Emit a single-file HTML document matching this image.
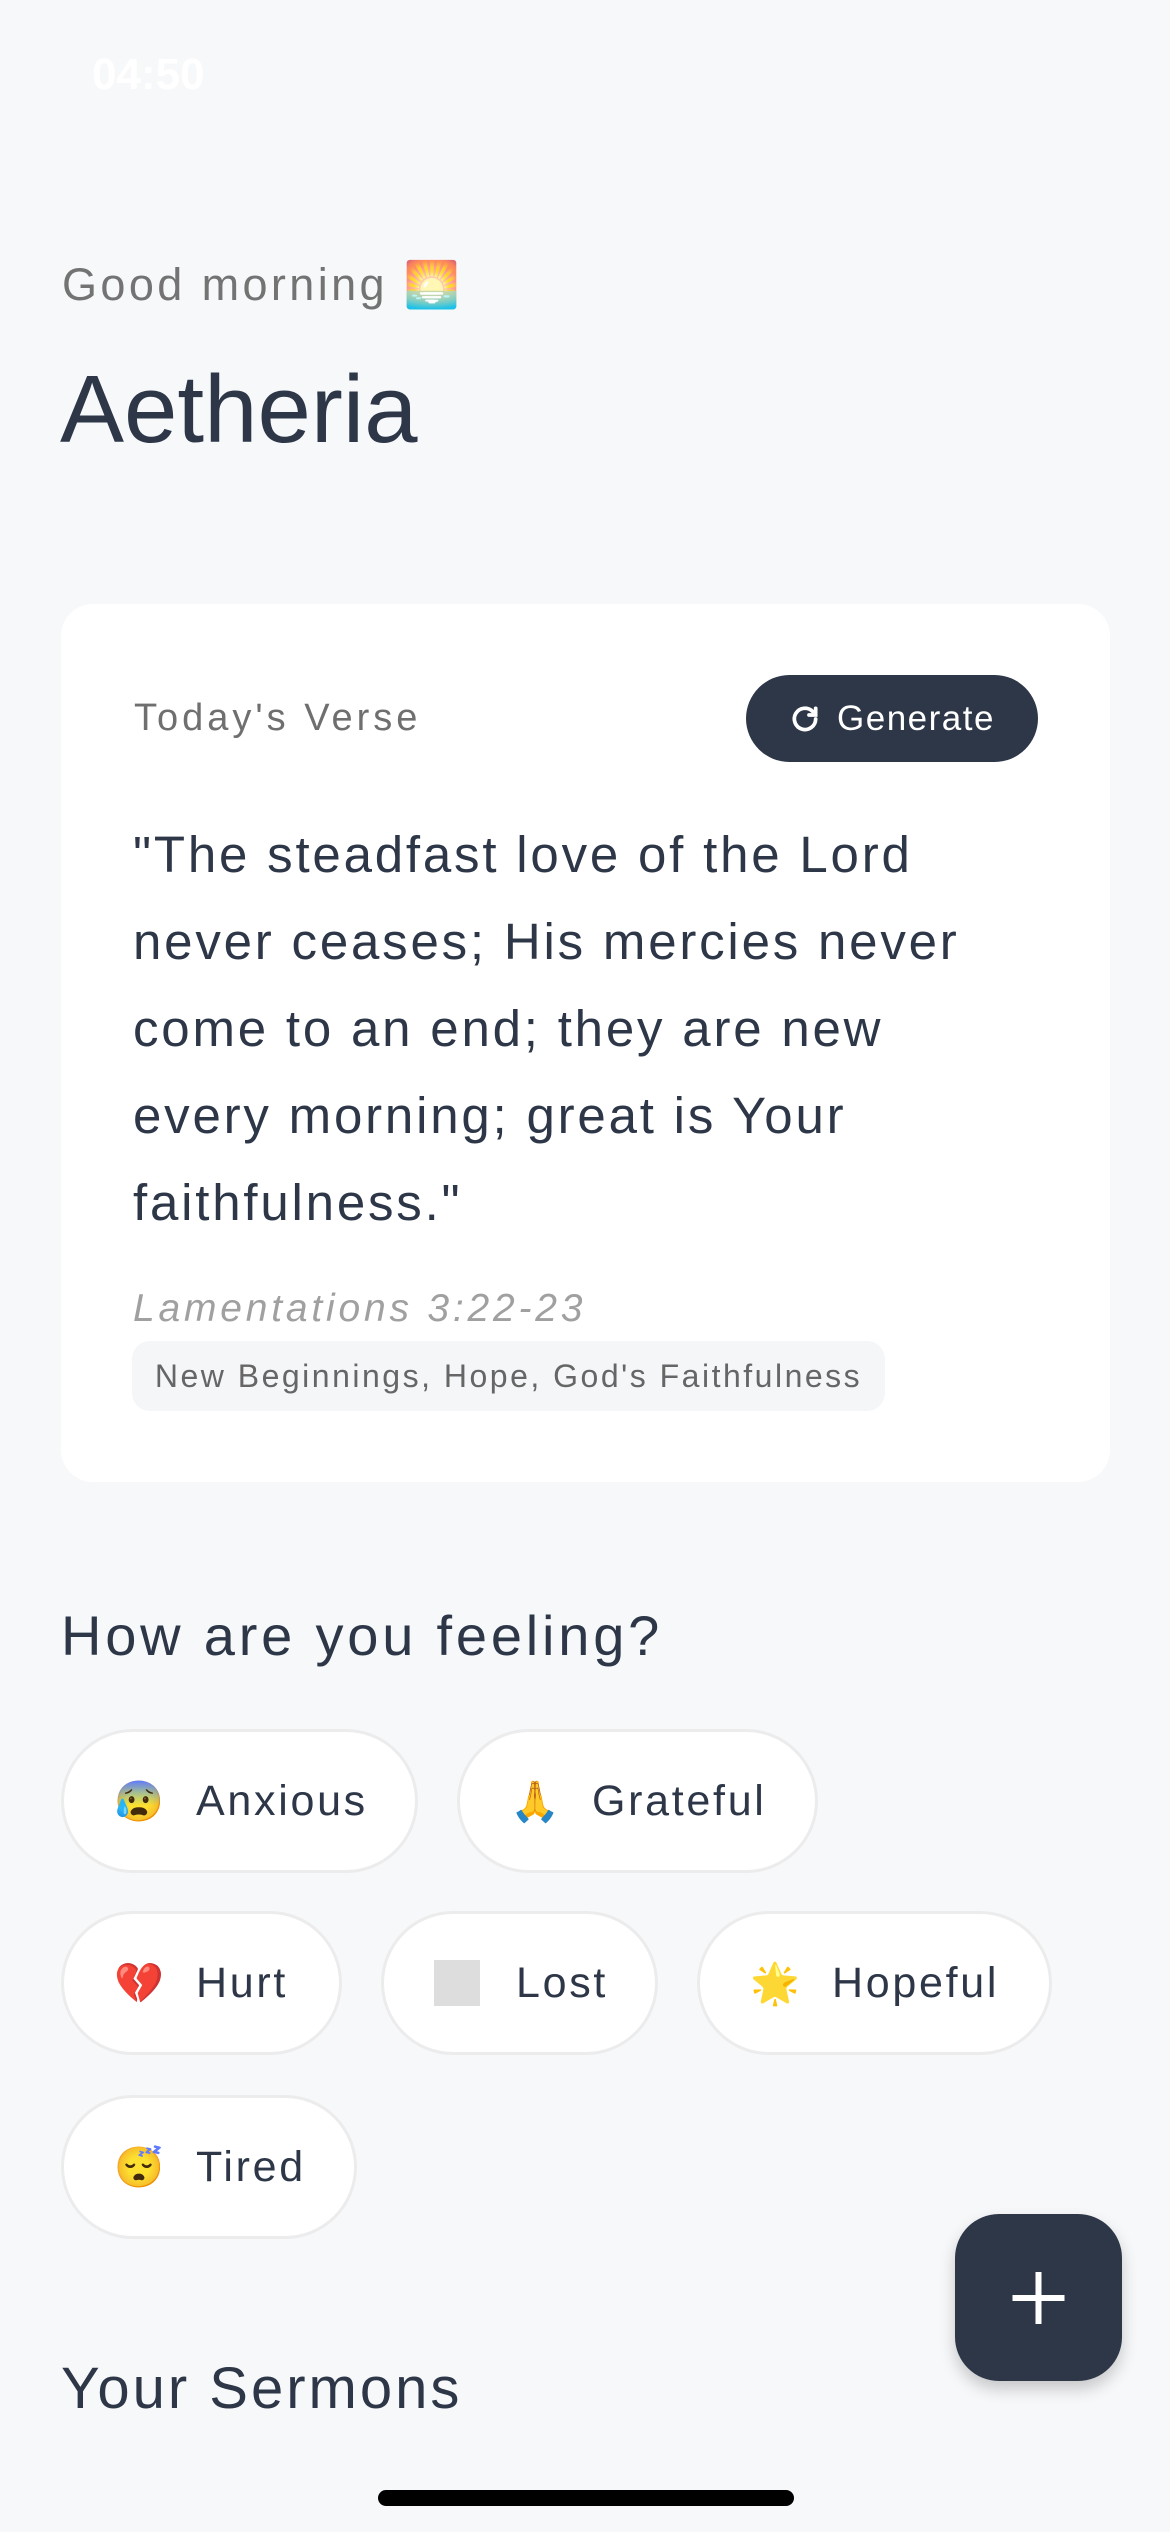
<!DOCTYPE html>
<html><head><meta charset="utf-8"><style>
*{margin:0;padding:0;box-sizing:border-box}
body{width:1170px;height:2532px;background:#f7f8fa;font-family:"Liberation Sans","Noto Sans CJK JP",sans-serif;position:relative;overflow:hidden;color:#2d3748}
.a{position:absolute;white-space:nowrap}
.card{position:absolute;left:61px;top:604px;width:1049px;height:878px;background:#fff;border-radius:32px}
.chip{position:absolute;height:144px;background:#fff;border:3px solid #ececec;border-radius:72px;font-size:43px;display:flex;align-items:center;padding-left:50px;color:#2d3748;letter-spacing:2.7px}
.chip .e{width:46px;font-size:40px;margin-right:36px;text-align:center;letter-spacing:0}
</style></head><body>
<div class="a" style="left:92px;top:50px;font-size:44px;color:#fff;font-weight:bold">04:50</div>
<div class="a" style="left:62px;top:258px;font-size:45px;color:#737373;letter-spacing:3.4px">Good morning 🌅</div>
<div class="a" style="left:60px;top:355px;font-size:96px;color:#2d3748">Aetheria</div>
<div class="card"></div>
<div class="a" style="left:134px;top:697px;font-size:38px;color:#6f6f6f;letter-spacing:4px">Today's Verse</div>
<div class="a" style="left:746px;top:675px;width:292px;height:87px;background:#2d3748;border-radius:44px;color:#fff;font-size:35px;display:flex;align-items:center;justify-content:center;letter-spacing:1.5px"><svg width="32" height="32" viewBox="0 0 24 24" style="margin-right:16px" fill="none" stroke="#fff" stroke-width="2.8" stroke-linecap="round"><path d="M20 12a8 8 0 1 1-2.3-5.7"/><path d="M20 4v5h-5"/></svg>Generate</div>
<div class="a" style="left:133px;top:811px;font-size:51px;line-height:87px;color:#2d3748;white-space:normal;width:1000px;letter-spacing:2.8px">"The steadfast love of the Lord<br>never ceases; His mercies never<br>come to an end; they are new<br>every morning; great is Your<br>faithfulness."</div>
<div class="a" style="left:133px;top:1287px;font-size:39px;font-style:italic;color:#a0a0a0;letter-spacing:3.8px">Lamentations 3:22-23</div>
<div class="a" style="left:132px;top:1341px;width:753px;height:70px;background:#f4f6f8;border-radius:18px;font-size:32px;color:#666;display:flex;align-items:center;justify-content:center;letter-spacing:2.5px">New Beginnings, Hope, God's Faithfulness</div>
<div class="a" style="left:61px;top:1603px;font-size:56px;color:#2d3748;letter-spacing:3.8px">How are you feeling?</div>
<div class="chip" style="left:61px;top:1729px;width:357px"><span class="e">😰</span>Anxious</div>
<div class="chip" style="left:457px;top:1729px;width:361px"><span class="e">🙏</span>Grateful</div>
<div class="chip" style="left:61px;top:1911px;width:281px"><span class="e">💔</span>Hurt</div>
<div class="chip" style="left:381px;top:1911px;width:277px"><span class="e" style="background:#ddd;height:46px"></span>Lost</div>
<div class="chip" style="left:697px;top:1911px;width:355px"><span class="e">🌟</span>Hopeful</div>
<div class="chip" style="left:61px;top:2095px;width:296px"><span class="e">😴</span>Tired</div>
<div class="a" style="left:955px;top:2214px;width:167px;height:167px;background:#2d3748;border-radius:44px;box-shadow:0 8px 16px rgba(0,0,0,0.2)"><svg width="167" height="167" viewBox="0 0 167 167"><path d="M83.5 58v52M57.5 84h52" stroke="#fff" stroke-width="6"/></svg></div>
<div class="a" style="left:61px;top:2355px;font-size:58px;color:#2d3748;letter-spacing:3px">Your Sermons</div>
<div class="a" style="left:378px;top:2490px;width:416px;height:16px;background:#000;border-radius:8px"></div>
</body></html>
